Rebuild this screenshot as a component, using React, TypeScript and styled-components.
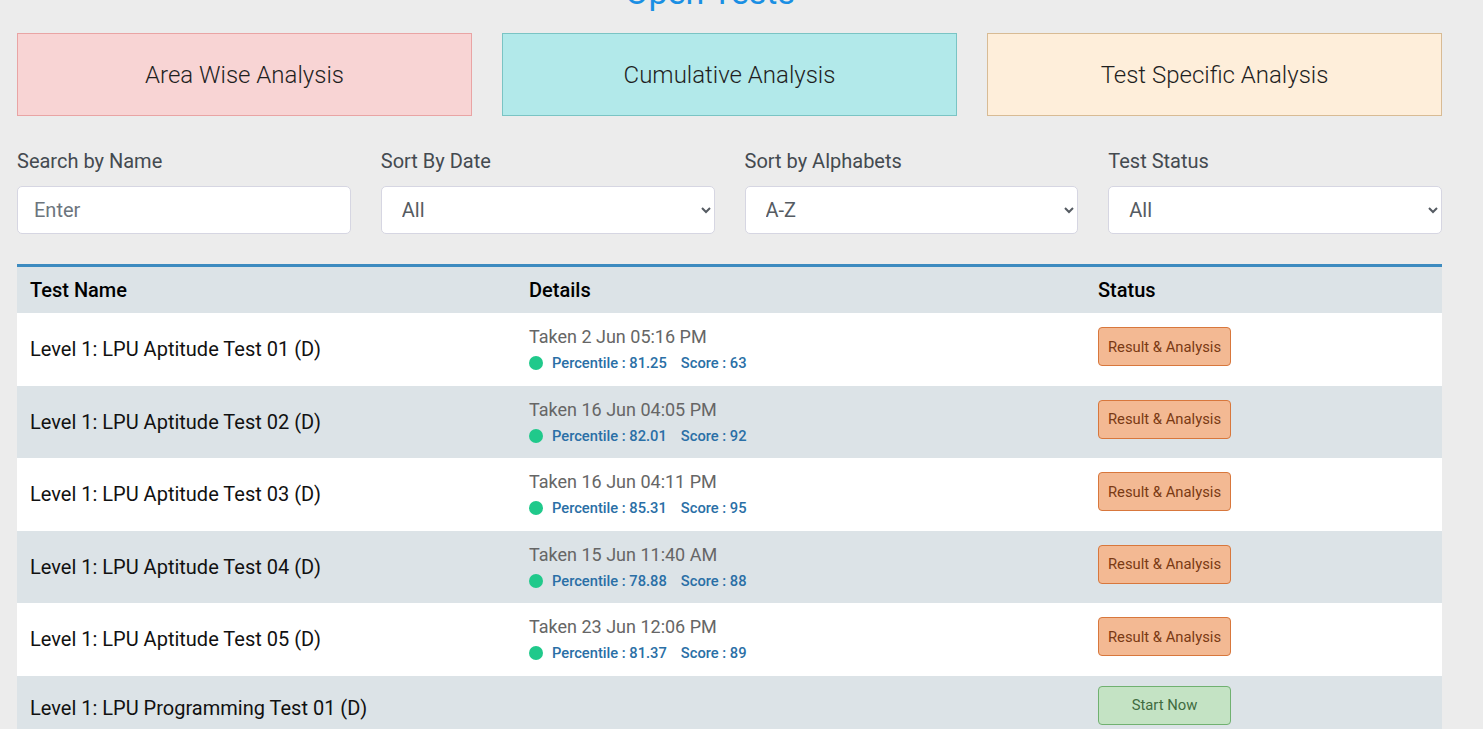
import React from "react";
import styled, { createGlobalStyle } from "styled-components";

const GlobalStyle = createGlobalStyle`
  html, body {
    margin: 0;
    padding: 0;
    background: #ececec;
    font-family: Roboto, "Noto Sans", Arial, sans-serif;
    overflow: hidden;
  }
  * { box-sizing: border-box; }
`;

const Page = styled.div`
  width: 1425px;
  margin-left: 17px;
`;

const Title = styled.h1`
  margin: -28px 0 0 0;
  padding-right: 39px;
  height: 40px;
  font-size: 34px;
  line-height: 40px;
  font-weight: 400;
  color: #1a8fe3;
  text-align: center;
`;

const CardRow = styled.div`
  display: grid;
  grid-template-columns: repeat(3, 1fr);
  gap: 30px;
  margin-top: 21px;
`;

const Card = styled.div<{ $bg: string; $border: string }>`
  height: 83px;
  display: flex;
  align-items: center;
  justify-content: center;
  background: ${(p) => p.$bg};
  border: 1px solid ${(p) => p.$border};
  font-size: 24px;
  font-weight: 300;
  color: #1f1f1f;
`;

const FilterRow = styled.div`
  display: grid;
  grid-template-columns: repeat(4, 1fr);
  column-gap: 30px;
  margin-top: 32px;
`;

const Field = styled.div`
  display: flex;
  flex-direction: column;
  gap: 11px;
`;

const Label = styled.label`
  font-size: 20px;
  line-height: 27px;
  color: #444a50;
`;

const controlCss = `
  height: 48px;
  width: 100%;
  border: 1px solid #d6d6e2;
  border-radius: 5px;
  background-color: #fff;
  font-family: Roboto, "Noto Sans", Arial, sans-serif;
  font-size: 20px;
  padding: 0 10px 0 16px;
  outline: none;
`;

const TextInput = styled.input`
  ${controlCss}
  color: #495057;
  &::placeholder { color: #6c757d; }
`;

const Select = styled.select`
  ${controlCss}
  color: #555b62;
`;

const Table = styled.table`
  width: 100%;
  margin-top: 30px;
  border-collapse: collapse;
  border-top: 3px solid #3d8bc0;
  table-layout: fixed;
`;

const Th = styled.th<{ $w: number }>`
  width: ${(p) => p.$w}px;
  text-align: left;
  padding: 8px 13px;
  font-size: 20px;
  line-height: 30px;
  font-weight: 500;
  color: #000;
  background: #dce3e7;
`;

const Tr = styled.tr<{ $alt: boolean }>`
  background: ${(p) => (p.$alt ? "#dce3e7" : "#ffffff")};
`;

const Td = styled.td`
  padding: 10px 13px;
  vertical-align: middle;
  font-size: 20px;
  line-height: 30px;
  color: #111;
`;

const Taken = styled.div`
  font-size: 18px;
  line-height: 27px;
  color: #666;
`;

const StatsLine = styled.div`
  margin-top: 1px;
  display: flex;
  align-items: center;
  font-size: 14.7px;
  line-height: 24.5px;
  font-weight: 500;
  color: #2a6fa6;
`;

const Dot = styled.span`
  width: 14px;
  height: 14px;
  border-radius: 50%;
  background: #20c98b;
  margin-right: 9px;
`;

const Stat = styled.span`
  margin-right: 14px;
`;

const Button = styled.button<{ $kind: "result" | "start" }>`
  display: block;
  width: 133px;
  height: 39px;
  margin-bottom: 5px;
  border-radius: 4px;
  font-family: Roboto, "Noto Sans", Arial, sans-serif;
  font-size: 14.8px;
  padding: 0;
  cursor: pointer;
  background: ${(p) => (p.$kind === "result" ? "#f3b993" : "#c4e3c4")};
  border: 1px solid ${(p) => (p.$kind === "result" ? "#d8773c" : "#70b170")};
  color: ${(p) => (p.$kind === "result" ? "#7a3a14" : "#3f6b3f")};
`;

type Row = {
  name: string;
  taken?: string;
  percentile?: string;
  score?: string;
};

const rows: Row[] = [
  { name: "Level 1: LPU Aptitude Test 01 (D)", taken: "Taken 2 Jun 05:16 PM", percentile: "81.25", score: "63" },
  { name: "Level 1: LPU Aptitude Test 02 (D)", taken: "Taken 16 Jun 04:05 PM", percentile: "82.01", score: "92" },
  { name: "Level 1: LPU Aptitude Test 03 (D)", taken: "Taken 16 Jun 04:11 PM", percentile: "85.31", score: "95" },
  { name: "Level 1: LPU Aptitude Test 04 (D)", taken: "Taken 15 Jun 11:40 AM", percentile: "78.88", score: "88" },
  { name: "Level 1: LPU Aptitude Test 05 (D)", taken: "Taken 23 Jun 12:06 PM", percentile: "81.37", score: "89" },
  { name: "Level 1: LPU Programming Test 01 (D)" },
];

export default function App() {
  return (
    <>
      <GlobalStyle />
      <Page>
        <Title>Open Tests</Title>
        <CardRow>
          <Card $bg="#f8d4d4" $border="#e9a4a4">Area Wise Analysis</Card>
          <Card $bg="#b2e9ea" $border="#7ac4c4">Cumulative Analysis</Card>
          <Card $bg="#feeeda" $border="#d8bb94">Test Specific Analysis</Card>
        </CardRow>
        <FilterRow>
          <Field>
            <Label>Search by Name</Label>
            <TextInput placeholder="Enter" />
          </Field>
          <Field>
            <Label>Sort By Date</Label>
            <Select defaultValue="All">
              <option>All</option>
            </Select>
          </Field>
          <Field>
            <Label>Sort by Alphabets</Label>
            <Select defaultValue="A-Z">
              <option>A-Z</option>
              <option>Z-A</option>
            </Select>
          </Field>
          <Field>
            <Label>Test Status</Label>
            <Select defaultValue="All">
              <option>All</option>
            </Select>
          </Field>
        </FilterRow>
        <Table>
          <thead>
            <tr>
              <Th $w={499}>Test Name</Th>
              <Th $w={569}>Details</Th>
              <Th $w={357}>Status</Th>
            </tr>
          </thead>
          <tbody>
            {rows.map((r, i) => (
              <Tr key={r.name} $alt={i % 2 === 1}>
                <Td>{r.name}</Td>
                <Td>
                  {r.taken && (
                    <>
                      <Taken>{r.taken}</Taken>
                      <StatsLine>
                        <Dot />
                        <Stat>Percentile : {r.percentile}</Stat>
                        <Stat>Score : {r.score}</Stat>
                      </StatsLine>
                    </>
                  )}
                </Td>
                <Td>
                  {r.taken ? (
                    <Button $kind="result">Result &amp; Analysis</Button>
                  ) : (
                    <Button $kind="start">Start Now</Button>
                  )}
                </Td>
              </Tr>
            ))}
          </tbody>
        </Table>
      </Page>
    </>
  );
}
